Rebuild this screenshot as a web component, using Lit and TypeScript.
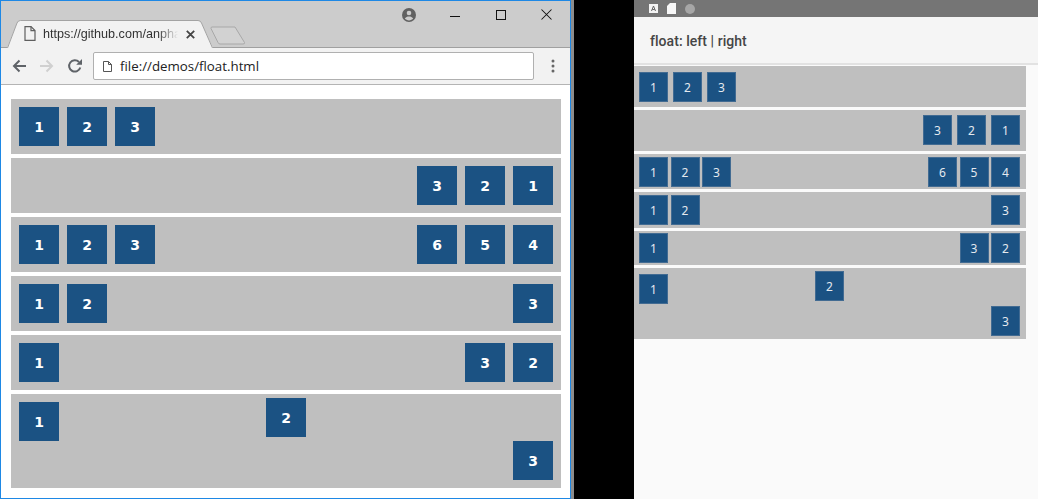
import { LitElement, css, html, nothing } from 'lit';
import { customElement, property } from 'lit/decorators.js';

interface Row {
  left: number[];
  right: number[];
  free?: boolean;
}

const ROWS: Row[] = [
  { left: [1, 2, 3], right: [] },
  { left: [], right: [3, 2, 1] },
  { left: [1, 2, 3], right: [6, 5, 4] },
  { left: [1, 2], right: [3] },
  { left: [1], right: [3, 2] },
  { left: [1], right: [], free: true },
];

@customElement('float-demo')
class FloatDemo extends LitElement {
  @property({ type: String }) size: 'desktop' | 'mobile' = 'desktop';

  static styles = css`
    :host {
      display: block;
    }
    .rows {
      display: flex;
      flex-direction: column;
    }
    .row {
      display: flex;
      background: #bfbfbf;
      box-sizing: border-box;
    }
    .group {
      display: flex;
    }
    .push {
      margin-left: auto;
    }
    .box {
      display: flex;
      align-items: center;
      justify-content: center;
      background: #1b5283;
      color: #fff;
      box-sizing: border-box;
    }

    .desktop .rows {
      gap: 4px;
    }
    .desktop .row {
      height: 55px;
      padding: 8px;
    }
    .desktop .group {
      gap: 8px;
    }
    .desktop .box {
      width: 40px;
      height: 39px;
      font: bold 14px 'DejaVu Sans', sans-serif;
    }
    .desktop .free {
      height: 94px;
    }
    .desktop .free .b2 {
      margin: -4px 0 0 207px;
    }

    .mobile .row {
      height: 40px;
      padding: 5px 6px 3px 5px;
      margin-bottom: 3px;
    }
    .mobile .group {
      gap: 2.5px;
    }
    .mobile .box {
      width: 29px;
      height: 30px;
      border: 1px solid #426b92;
      font: 12px 'Noto Sans', sans-serif;
      color: #e4e9ef;
    }
    .mobile .row-0 {
      height: 41px;
      margin-bottom: 3px;
      padding-top: 6px;
    }
    .mobile .row-1 {
      height: 41px;
      padding-top: 5px;
      margin-bottom: 3px;
    }
    .mobile .row-0 .group,
    .mobile .row-1 .group {
      gap: 5px;
    }
    .mobile .row-2 {
      height: 35px;
      padding-top: 3px;
    }
    .mobile .row-3 {
      height: 36px;
      padding-top: 3px;
    }
    .mobile .row-4 {
      height: 34px;
      padding-top: 2px;
    }
    .mobile .free {
      height: 71px;
      padding-top: 6px;
      margin-bottom: 0;
    }
    .mobile .free .b2 {
      margin: -3px 0 0 147px;
    }

    .free {
      align-items: flex-start;
    }
    .free .b3 {
      margin-left: auto;
      align-self: flex-end;
    }
  `;

  private box(n: number, extra = '') {
    return html`<div class="box ${extra}">${n}</div>`;
  }

  private renderRow(row: Row, i: number) {
    if (row.free) {
      return html`<div class="row free">
        ${this.box(1)}${this.box(2, 'b2')}${this.box(3, 'b3')}
      </div>`;
    }
    return html`<div class="row row-${i}">
      ${row.left.length ? html`<div class="group">${row.left.map((n) => this.box(n))}</div>` : nothing}
      ${row.right.length ? html`<div class="group push">${row.right.map((n) => this.box(n))}</div>` : nothing}
    </div>`;
  }

  render() {
    return html`<div class=${this.size}>
      <div class="rows">${ROWS.map((r, i) => this.renderRow(r, i))}</div>
    </div>`;
  }
}

@customElement('app-root')
class AppRoot extends LitElement {
  static styles = css`
    :host {
      display: flex;
      width: 1038px;
      height: 499px;
      background: #000;
      overflow: hidden;
    }
    .window {
      width: 571px;
      height: 499px;
      box-sizing: border-box;
      border: 1px solid #1e88e5;
      background: #fff;
      display: flex;
      flex-direction: column;
      flex: none;
    }
    .edge {
      width: 3px;
      flex: none;
      background: #8c8c8c;
    }
    .titlebar {
      height: 47px;
      flex: none;
      box-sizing: border-box;
      background: #cccccc;
      border-bottom: 1px solid #a0a0a0;
      display: flex;
      position: relative;
      padding: 0 18px 0 6px;
    }
    .tab {
      width: 206px;
      flex: none;
      box-sizing: border-box;
      padding: 25px 0 0 17px;
      display: flex;
      align-items: flex-start;
      position: relative;
    }
    .tab-shape {
      position: absolute;
      left: 0;
      top: 19px;
    }
    .tab-file {
      position: relative;
    }
    .tab-title {
      position: relative;
      margin-left: 7px;
      width: 135px;
      white-space: nowrap;
      font: 12.6px/17px 'Liberation Sans', sans-serif;
      color: #333;
      -webkit-mask-image: linear-gradient(90deg, #000 85%, transparent 100%);
      mask-image: linear-gradient(90deg, #000 85%, transparent 100%);
    }
    .tab-close {
      position: relative;
      margin: 4px 0 0 8px;
    }
    .new-tab {
      flex: none;
      margin: 25px 0 0 -3px;
    }
    .caption {
      margin-left: auto;
      display: flex;
      align-items: flex-start;
      padding-top: 7px;
    }
    .caption .user {
      margin-right: 34px;
    }
    .caption .min {
      margin: 1px 36px 0 0;
    }
    .caption .max {
      margin: 1px 35px 0 0;
    }
    .caption .close {
      margin-top: 1px;
    }
    .toolbar {
      height: 37px;
      flex: none;
      box-sizing: border-box;
      background: #f2f2f2;
      border-bottom: 1px solid #b4b4b4;
      display: flex;
      align-items: center;
      padding: 0 0 0 10px;
    }
    .nav {
      display: flex;
      gap: 12px;
      flex: none;
    }
    .address {
      margin-left: 10px;
      width: 441px;
      height: 28px;
      box-sizing: border-box;
      border: 1px solid #b0b0b0;
      border-radius: 2px;
      background: #fff;
      display: flex;
      align-items: center;
      padding-left: 9px;
      gap: 8px;
      font: 13.3px 'Open Sans', sans-serif;
      color: #222;
      flex: none;
    }
    .menu {
      margin-left: 17px;
      flex: none;
    }
    .content {
      padding: 14px 9px 0 10px;
    }
    .phone {
      margin-left: 60px;
      width: 404px;
      height: 499px;
      flex: none;
      background: #fafafa;
      display: flex;
      flex-direction: column;
    }
    .status {
      height: 17px;
      flex: none;
      background: #757575;
      display: flex;
      align-items: center;
      gap: 9px;
      padding: 0 0 0 15px;
    }
    .appbar {
      height: 48px;
      flex: none;
      box-sizing: border-box;
      background: #f5f5f5;
      border-bottom: 2px solid #e2e2e2;
      display: flex;
      align-items: center;
      padding: 1px 0 0 16px;
      font: 500 14px Roboto, sans-serif;
      letter-spacing: 0.05px;
      color: #454545;
    }
    .phone float-demo {
      margin-top: 1px;
      width: 392px;
    }
  `;

  render() {
    return html`
      <div class="window">
        <div class="titlebar">
          <div class="tab">
            <svg class="tab-shape" width="206" height="28" viewBox="0 0 206 28">
              <path d="M0 28 L10 3 Q11 .5 13.500 .5 H191 Q193.500 .5 194.500 3 L206 28 Z" fill="#f2f2f2" />
              <path d="M0.5 28 L10 3 Q11 .5 13.500 .5 H191 Q193.500 .5 194.500 3 L205.500 28" fill="none" stroke="#a3a3a3" />
            </svg>
            <svg class="tab-file" width="12" height="15" viewBox="0 0 12 15" fill="none" stroke="#5f5f5f" stroke-width="1.2">
              <path d="M1 .6H7L11 4.6V14.4H1Z" />
              <path d="M7 .6V4.6H11" />
            </svg>
            <div class="tab-title">https://github.com/anpha</div>
            <svg class="tab-close" width="9" height="9" viewBox="0 0 9 9" stroke="#444" stroke-width="1.8">
              <path d="M.8.8 8.2 8.2M8.2.8.8 8.2" />
            </svg>
          </div>
          <svg class="new-tab" width="36" height="19" viewBox="0 0 36 19">
            <path d="M2 1H25L34.500 16.500Q35 18 33 18H10Q8.500 18 8 16.500L1 2.500Q.8 1 2 1Z" fill="#d2d2d2" stroke="#a8a8a8" />
          </svg>
          <div class="caption">
            <svg class="user" width="14" height="14" viewBox="0 0 14 14">
              <circle cx="7" cy="7" r="7" fill="#616161" />
              <circle cx="7" cy="5" r="2.3" fill="#ccc" />
              <path d="M2.800 10.600C3.600 8.900 5.400 8.400 7 8.400s3.400.5 4.200 2.200C10.200 11.800 8.700 12.400 7 12.400s-3.200-.6-4.200-1.800Z" fill="#ccc" />
            </svg>
            <svg class="min" width="10" height="12" viewBox="0 0 10 12" stroke="#111">
              <path d="M0 7.500H10" />
            </svg>
            <svg class="max" width="10" height="11" viewBox="0 0 10 11" fill="none" stroke="#111">
              <rect x=".5" y="1.500" width="9" height="9" />
            </svg>
            <svg class="close" width="11" height="11" viewBox="0 0 11 11" stroke="#111" stroke-width="1.050">
              <path d="M.5.500 10.500 10.500M10.500.500.500 10.500" />
            </svg>
          </div>
        </div>
        <div class="toolbar">
          <div class="nav">
            <svg width="16" height="16" viewBox="0 0 16 16" fill="none" stroke="#5f6368" stroke-width="2">
              <path d="M15 8H3M8.500 2.500 3 8l5.500 5.500" />
            </svg>
            <svg width="16" height="16" viewBox="0 0 16 16" fill="none" stroke="#d0d0d0" stroke-width="2">
              <path d="M1 8H13M7.500 2.500 13 8l-5.500 5.500" />
            </svg>
            <svg width="16" height="16" viewBox="0 0 16 16" fill="none">
              <path d="M13.300 9.500A5.700 5.700 0 1 1 12 4" stroke="#5f6368" stroke-width="2" />
              <path d="M9.200 6.800H15V1Z" fill="#5f6368" />
            </svg>
          </div>
          <div class="address">
            <svg width="9" height="11" viewBox="0 0 9 11" fill="none" stroke="#555">
              <path d="M.5.500H5.500L8.500 3.500V10.500H.5Z" />
              <path d="M5.500.500V3.500H8.500" />
            </svg>
            <span>file://demos/float.html</span>
          </div>
          <svg class="menu" width="4" height="14" viewBox="0 0 4 14" fill="#666">
            <circle cx="2" cy="2" r="1.500" />
            <circle cx="2" cy="7" r="1.500" />
            <circle cx="2" cy="12" r="1.500" />
          </svg>
        </div>
        <div class="content">
          <float-demo size="desktop"></float-demo>
        </div>
      </div>
      <div class="edge"></div>
      <div class="phone">
        <div class="status">
          <svg width="9" height="9" viewBox="0 0 9 9">
            <rect width="9" height="9" fill="#f4f4f4" />
            <path d="M2.500 7 4.500 2l2 5M3.300 5.500H5.700" fill="none" stroke="#666" />
          </svg>
          <svg width="9" height="11" viewBox="0 0 9 11">
            <path d="M3 0H9V11H0V3Z" fill="#f7f7f7" />
          </svg>
          <svg width="10" height="10" viewBox="0 0 10 10">
            <circle cx="5" cy="5" r="5" fill="#a6a6a6" />
          </svg>
        </div>
        <div class="appbar">float: left | right</div>
        <float-demo size="mobile"></float-demo>
      </div>
    `;
  }
}

export default AppRoot;
export { FloatDemo };
